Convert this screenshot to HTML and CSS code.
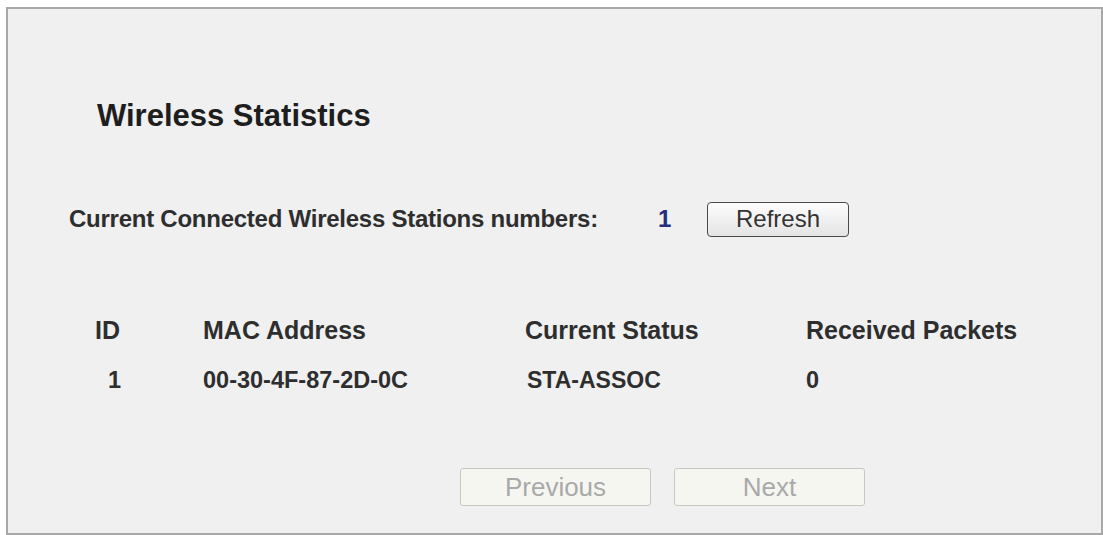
FILE: index.html
```html
<!DOCTYPE html>
<html lang="en">
<head>
    <meta charset="UTF-8">
    <meta name="viewport" content="width=device-width, initial-scale=1.0">
    <title>Wireless Statistics</title>
    <link rel="stylesheet" href="styles.css">
</head>
<body>
    <div class="panel">
        <h1 class="title">Wireless Statistics</h1>

        <div class="stations">
            <span class="stations-label">Current Connected Wireless Stations numbers:</span>
            <span class="stations-count">1</span>
            <button class="btn-refresh">Refresh</button>
        </div>

        <div class="stats-table">
            <div class="cell head">ID</div>
            <div class="cell head">MAC Address</div>
            <div class="cell head">Current Status</div>
            <div class="cell head">Received Packets</div>

            <div class="cell id">1</div>
            <div class="cell">00-30-4F-87-2D-0C</div>
            <div class="cell status">STA-ASSOC</div>
            <div class="cell">0</div>
        </div>

        <div class="pager">
            <button class="btn-page btn-prev" disabled>Previous</button>
            <button class="btn-page btn-next" disabled>Next</button>
        </div>
    </div>
</body>
</html>
```

FILE: styles.css
```css
html, body {
    margin: 0;
    padding: 0;
    background: #ffffff;
    overflow: hidden;
}

body {
    font-family: "Liberation Sans", Arial, sans-serif;
    color: #2b2b2b;
}

.panel {
    box-sizing: border-box;
    margin: 7px 0 0 6px;
    width: 1097px;
    height: 528px;
    border: 2px solid #a8a8a8;
    background: #f0f0f0;
}

.title {
    margin: 89px 0 0 89px;
    font-size: 31px;
    line-height: 36px;
    font-weight: bold;
    color: #1e1e1e;
}

.stations {
    display: flex;
    align-items: center;
    margin-top: 67px;
    padding-left: 61px;
    height: 36px;
}

.stations-label {
    width: 589px;
    font-size: 24px;
    font-weight: bold;
    letter-spacing: -0.25px;
    color: #2e2e2e;
}

.stations-count {
    width: 49px;
    font-size: 24px;
    font-weight: bold;
    color: #232f7c;
}

.btn-refresh {
    box-sizing: border-box;
    width: 142px;
    height: 35px;
    border: 1px solid #4a4a4a;
    border-radius: 4px;
    background: linear-gradient(#fdfdfd, #e4e4e4);
    font-family: "Liberation Sans", Arial, sans-serif;
    font-size: 24px;
    color: #333;
    padding: 0;
}

.stats-table {
    display: grid;
    grid-template-columns: 108px 322px 281px 1fr;
    grid-auto-rows: 30px;
    row-gap: 20px;
    margin-top: 78px;
    padding-left: 87px;
    align-items: center;
}

.cell {
    font-size: 23.5px;
    font-weight: bold;
    color: #2e2e2e;
    white-space: nowrap;
}

.cell.head {
    font-size: 25px;
}

.cell.id {
    padding-left: 13px;
}

.cell.status {
    padding-left: 2px;
    font-size: 23px;
}

.pager {
    display: flex;
    gap: 23px;
    margin-top: 73px;
    padding-left: 452px;
}

.btn-page {
    box-sizing: border-box;
    width: 191px;
    height: 38px;
    border: 1px solid #c8c8c3;
    border-radius: 3px;
    background: #f6f6f1;
    font-family: "Liberation Sans", Arial, sans-serif;
    font-size: 26px;
    color: #a9a9a9;
    padding: 0;
}
```
